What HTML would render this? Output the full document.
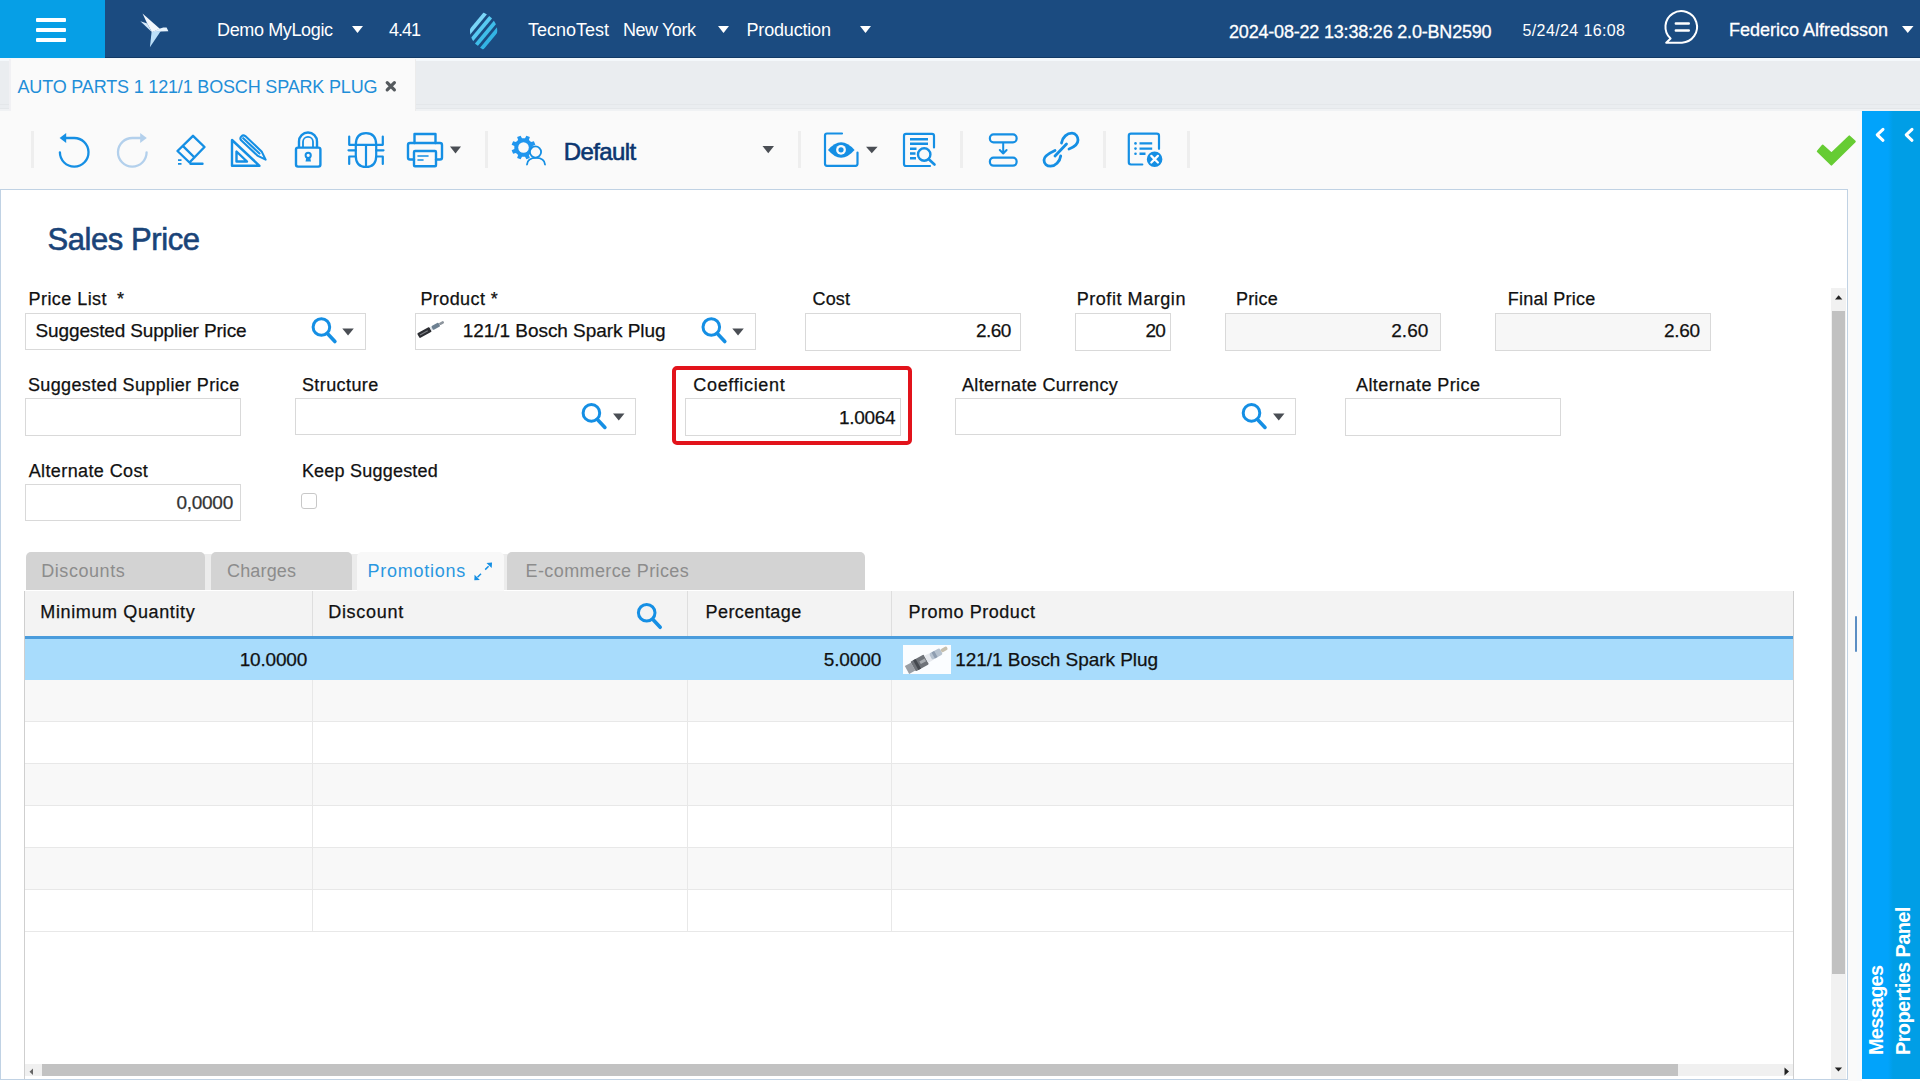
<!DOCTYPE html>
<html><head><meta charset="utf-8"><style>
html,body{margin:0;padding:0;width:1920px;height:1081px;overflow:hidden;background:#fff}
.t{position:absolute;white-space:nowrap;font-family:"Liberation Sans",sans-serif}
.d{-webkit-text-stroke:0.25px currentColor}
</style></head><body>
<div style="position:absolute;left:0px;top:0px;width:1920px;height:1081px;background:#ffffff"></div>
<div style="position:absolute;left:0px;top:0px;width:1920px;height:58px;background:#1b4b80"></div>
<div style="position:absolute;left:0px;top:57px;width:1920px;height:1px;background:#123a66"></div>
<div style="position:absolute;left:0px;top:0px;width:105px;height:58px;background:#069fe6"></div>
<div style="position:absolute;left:0px;top:58px;width:1920px;height:53px;background:#eaedf0"></div>
<div style="position:absolute;left:0px;top:58px;width:1920px;height:3px;background:#f4f8fb"></div>
<div style="position:absolute;left:0px;top:104px;width:1920px;height:1px;background:#e4e7ea"></div>
<div style="position:absolute;left:0px;top:108px;width:1920px;height:1px;background:#e4e7ea"></div>
<div style="position:absolute;left:0px;top:109px;width:1920px;height:2px;background:#f0f2f4"></div>
<div style="position:absolute;left:9px;top:59px;width:407px;height:52px;background:#fafafa;box-sizing:border-box;border-left:2px solid #f1f1f4;border-right:1px solid #ececec"></div>
<div style="position:absolute;left:0px;top:111px;width:1857px;height:78px;background:#fafafa"></div>
<div style="position:absolute;left:1857px;top:111px;width:5px;height:970px;background:#f8fafc"></div>
<div style="position:absolute;left:1848px;top:189px;width:9px;height:892px;background:#fafafa"></div>
<div style="position:absolute;left:1862px;top:111px;width:58px;height:968px;background:linear-gradient(90deg,#01a3fb 0,#01a3fb 26px,#009ee6 31px,#009ee6 58px)"></div>
<div style="position:absolute;left:0px;top:189px;width:1848px;height:891px;background:#ffffff;box-sizing:border-box;border:1px solid #c0d2e4"></div>
<div style="position:absolute;left:36px;top:18px;width:30px;height:4px;background:#fff;border-radius:1px"></div>
<div style="position:absolute;left:36px;top:28px;width:30px;height:4px;background:#fff;border-radius:1px"></div>
<div style="position:absolute;left:36px;top:38px;width:30px;height:4px;background:#fff;border-radius:1px"></div>
<div style="position:absolute;left:31px;top:131px;width:3px;height:37px;background:#eeeeee"></div>
<div style="position:absolute;left:485px;top:131px;width:3px;height:37px;background:#eeeeee"></div>
<div style="position:absolute;left:798px;top:131px;width:3px;height:37px;background:#eeeeee"></div>
<div style="position:absolute;left:960px;top:131px;width:3px;height:37px;background:#eeeeee"></div>
<div style="position:absolute;left:1103px;top:131px;width:3px;height:37px;background:#eeeeee"></div>
<div style="position:absolute;left:1187px;top:131px;width:3px;height:37px;background:#eeeeee"></div>
<div style="position:absolute;left:25px;top:313px;width:341px;height:37px;box-sizing:border-box;border:1px solid #d9d9d9;background:#fff"></div>
<div style="position:absolute;left:415px;top:313px;width:341px;height:37px;box-sizing:border-box;border:1px solid #d9d9d9;background:#fff"></div>
<div style="position:absolute;left:805px;top:313px;width:216px;height:38px;box-sizing:border-box;border:1px solid #d9d9d9;background:#fff"></div>
<div style="position:absolute;left:1075px;top:313px;width:96px;height:38px;box-sizing:border-box;border:1px solid #d9d9d9;background:#fff"></div>
<div style="position:absolute;left:1225px;top:313px;width:216px;height:38px;box-sizing:border-box;border:1px solid #d9d9d9;background:#f7f7f7"></div>
<div style="position:absolute;left:1495px;top:313px;width:216px;height:38px;box-sizing:border-box;border:1px solid #d9d9d9;background:#f7f7f7"></div>
<div style="position:absolute;left:25px;top:398px;width:216px;height:38px;box-sizing:border-box;border:1px solid #d9d9d9;background:#fff"></div>
<div style="position:absolute;left:295px;top:398px;width:341px;height:37px;box-sizing:border-box;border:1px solid #d9d9d9;background:#fff"></div>
<div style="position:absolute;left:685px;top:398px;width:216px;height:38px;box-sizing:border-box;border:1px solid #d9d9d9;background:#fff"></div>
<div style="position:absolute;left:955px;top:398px;width:341px;height:37px;box-sizing:border-box;border:1px solid #d9d9d9;background:#fff"></div>
<div style="position:absolute;left:1345px;top:398px;width:216px;height:38px;box-sizing:border-box;border:1px solid #d9d9d9;background:#fff"></div>
<div style="position:absolute;left:25px;top:484px;width:216px;height:37px;box-sizing:border-box;border:1px solid #d9d9d9;background:#fff"></div>
<div style="position:absolute;left:672px;top:366px;width:240px;height:79px;box-sizing:border-box;border:4px solid #e2131b;border-radius:5px"></div>
<div style="position:absolute;left:301px;top:493px;width:16px;height:16px;box-sizing:border-box;border:1px solid #c8c8c8;border-radius:3px;background:#fff"></div>
<div style="position:absolute;left:1831px;top:288px;width:15px;height:791px;background:#f1f1f1"></div>
<div style="position:absolute;left:1832px;top:311px;width:13px;height:663px;background:#c1c1c1"></div>
<div style="position:absolute;left:204px;top:554px;width:8px;height:36px;background:#ececec"></div>
<div style="position:absolute;left:351px;top:554px;width:7px;height:36px;background:#ececec"></div>
<div style="position:absolute;left:503px;top:554px;width:5px;height:36px;background:#ececec"></div>
<div style="position:absolute;left:26px;top:552px;width:179px;height:38px;background:#d3d3d3;border-radius:5px 5px 0 0"></div>
<div style="position:absolute;left:211px;top:552px;width:141px;height:38px;background:#d3d3d3;border-radius:5px 5px 0 0"></div>
<div style="position:absolute;left:357px;top:552px;width:147px;height:39px;background:#f8f8f8;border-radius:5px 5px 0 0"></div>
<div style="position:absolute;left:507px;top:552px;width:358px;height:38px;background:#d3d3d3;border-radius:5px 5px 0 0"></div>
<div style="position:absolute;left:24px;top:591px;width:1770px;height:488px;box-sizing:border-box;border-left:1px solid #cfcfcf;border-right:1px solid #cfcfcf;background:#fff"></div>
<div style="position:absolute;left:25px;top:591px;width:1768px;height:45px;background:#f3f3f3"></div>
<div style="position:absolute;left:25px;top:636px;width:1768px;height:3px;background:#4a9cdc"></div>
<div style="position:absolute;left:25px;top:639px;width:1768px;height:41px;background:#a8dcfc"></div>
<div style="position:absolute;left:25px;top:680px;width:1768px;height:42px;background:#f8f8f8;border-bottom:1px solid #e8e8e8;box-sizing:border-box"></div>
<div style="position:absolute;left:25px;top:722px;width:1768px;height:42px;background:#ffffff;border-bottom:1px solid #e8e8e8;box-sizing:border-box"></div>
<div style="position:absolute;left:25px;top:764px;width:1768px;height:42px;background:#f8f8f8;border-bottom:1px solid #e8e8e8;box-sizing:border-box"></div>
<div style="position:absolute;left:25px;top:806px;width:1768px;height:42px;background:#ffffff;border-bottom:1px solid #e8e8e8;box-sizing:border-box"></div>
<div style="position:absolute;left:25px;top:848px;width:1768px;height:42px;background:#f8f8f8;border-bottom:1px solid #e8e8e8;box-sizing:border-box"></div>
<div style="position:absolute;left:25px;top:890px;width:1768px;height:42px;background:#ffffff;border-bottom:1px solid #e8e8e8;box-sizing:border-box"></div>
<div style="position:absolute;left:312px;top:591px;width:1px;height:45px;background:#dedede"></div>
<div style="position:absolute;left:312px;top:680px;width:1px;height:252px;background:#e8e8e8"></div>
<div style="position:absolute;left:687px;top:591px;width:1px;height:45px;background:#dedede"></div>
<div style="position:absolute;left:687px;top:680px;width:1px;height:252px;background:#e8e8e8"></div>
<div style="position:absolute;left:891px;top:591px;width:1px;height:45px;background:#dedede"></div>
<div style="position:absolute;left:891px;top:680px;width:1px;height:252px;background:#e8e8e8"></div>
<div style="position:absolute;left:25px;top:1064px;width:1768px;height:12px;background:#f0f0f0"></div>
<div style="position:absolute;left:42px;top:1064px;width:1636px;height:12px;background:#c2c2c2"></div>
<div style="position:absolute;left:1855px;top:616px;width:2px;height:36px;background:#5b8ec4;border-radius:1px"></div>
<svg style="position:absolute;left:0;top:0" width="1920" height="1081" viewBox="0 0 1920 1081">
<circle cx="321.4" cy="327.0" r="8.3" fill="none" stroke="#158fe4" stroke-width="3"/>
<line x1="327.4" y1="333.5" x2="334.9" y2="341.5" stroke="#158fe4" stroke-width="3.6" stroke-linecap="round"/>
<polygon points="342.3,328.4 353.8,328.4 348.05,335.4" fill="#4a4e54"/>
<circle cx="711.3" cy="327.0" r="8.3" fill="none" stroke="#158fe4" stroke-width="3"/>
<line x1="717.3" y1="333.5" x2="724.8" y2="341.5" stroke="#158fe4" stroke-width="3.6" stroke-linecap="round"/>
<polygon points="732.3,328.4 743.8,328.4 738.05,335.4" fill="#4a4e54"/>
<circle cx="591.4" cy="412.9" r="8.3" fill="none" stroke="#158fe4" stroke-width="3"/>
<line x1="597.4" y1="419.4" x2="604.9" y2="427.4" stroke="#158fe4" stroke-width="3.6" stroke-linecap="round"/>
<polygon points="613,413.4 624.5,413.4 618.75,420.4" fill="#4a4e54"/>
<circle cx="1251.5" cy="412.9" r="8.3" fill="none" stroke="#158fe4" stroke-width="3"/>
<line x1="1257.5" y1="419.4" x2="1265.0" y2="427.4" stroke="#158fe4" stroke-width="3.6" stroke-linecap="round"/>
<polygon points="1273,413.4 1284.5,413.4 1278.75,420.4" fill="#4a4e54"/>
<circle cx="646.7" cy="612.8" r="8.3" fill="none" stroke="#158fe4" stroke-width="3"/>
<line x1="652.7" y1="619.3" x2="660.2" y2="627.3" stroke="#158fe4" stroke-width="3.6" stroke-linecap="round"/>
<polygon points="352,26 363,26 357.5,33" fill="#fff"/>
<polygon points="718,26 729,26 723.5,33" fill="#fff"/>
<polygon points="860,26 871,26 865.5,33" fill="#fff"/>
<polygon points="1902,26 1913.5,26 1907.75,33" fill="#fff"/>
<polygon points="450,146.4 461,146.4 455.5,153.4" fill="#4a4e54"/>
<polygon points="762.5,146 774.0,146 768.25,153.3" fill="#4a4e54"/>
<polygon points="866,146.7 877.6,146.7 871.8,153.29999999999998" fill="#4a4e54"/>
<path d="M59.9,152.3 A14.3,14.3 0 1 0 73.7,138.0 L65.5,138.0" fill="none" stroke="#158fe4" stroke-width="2.3" stroke-linecap="round" stroke-linejoin="round" />
<path d="M59.6,138 L66.2,133 L66.2,143 Z" fill="#158fe4"/>
<path d="M146.6,152.3 A14.3,14.3 0 1 1 132.8,138.0 L140.8,138.0" fill="none" stroke="#b3d0ec" stroke-width="2.3" stroke-linecap="round" stroke-linejoin="round" />
<path d="M146.8,138 L140.2,133 L140.2,143 Z" fill="#b3d0ec"/>
<path d="M177.5,151 L193,135.8 L204.5,147 L189.5,162.5 Z M182.8,145.8 L194.5,157.5 M190.5,163.8 L202.5,163.8" fill="none" stroke="#158fe4" stroke-width="2.4" stroke-linecap="round" stroke-linejoin="round" />
<path d="M178,160.2 L181.5,160.2 M178,163.8 L181.5,163.8" fill="none" stroke="#158fe4" stroke-width="1.8" stroke-linejoin="round" stroke-linecap="butt"/>
<path d="M232,140 L232,165.8 L259.5,165.8 Z M236.5,151.5 L236.5,161.5 L247,161.5 Z" fill="none" stroke="#158fe4" stroke-width="2.4" stroke-linecap="round" stroke-linejoin="round" />
<path d="M241.1,140.3 A3,3 0 0 1 245.3,136.1 L261.6,151.4 L265.6,159.6 L257.4,155.6 Z M243.2,138.2 L259.5,153.5" fill="none" stroke="#158fe4" stroke-width="2.1" stroke-linecap="round" stroke-linejoin="round" />
<path d="M299,147 L299,141.5 A9,9 0 0 1 317,141.5 L317,147" fill="none" stroke="#158fe4" stroke-width="2.4" stroke-linecap="round" stroke-linejoin="round" />
<path d="M303,147 L303,141.8 A5,5 0 0 1 313,141.8 L313,147" fill="none" stroke="#158fe4" stroke-width="1.8" stroke-linecap="round" stroke-linejoin="round" />
<rect x="296" y="147.6" width="24.4" height="19" rx="2" fill="none" stroke="#158fe4" stroke-width="2.4"/>
<circle cx="308.2" cy="155.3" r="2.6" fill="none" stroke="#158fe4" stroke-width="2"/>
<path d="M305.5,161.5 L311,161.5 L310,157 L306.5,157 Z" fill="#158fe4"/>
<path d="M355.8,144.8 L355.8,156 Q355.8,167 366,167 Q376.2,167 376.2,156 L376.2,144.8 Q376.2,133.2 366,133.2 Q355.8,133.2 355.8,144.8 Z" fill="none" stroke="#158fe4" stroke-width="2.2" stroke-linecap="round" stroke-linejoin="round" />
<path d="M349.2,136.5 L349.2,144.8 L382.8,144.8 L382.8,136.5 M366,144.8 L366,166.5 M348.5,150.3 L355.8,150.3 M376.2,150.3 L383.5,150.3 M349.2,164 L349.2,156.5 L355.8,156.5 M382.8,164 L382.8,156.5 L376.2,156.5" fill="none" stroke="#158fe4" stroke-width="2.2" stroke-linecap="round" stroke-linejoin="round" />
<path d="M414.5,143 L414.5,134 L435.5,134 L435.5,143" fill="none" stroke="#158fe4" stroke-width="2.4" stroke-linecap="round" stroke-linejoin="round" />
<path d="M414,159.5 L410,159.5 Q408,159.5 408,157.5 L408,145 Q408,143 410,143 L440,143 Q442,143 442,145 L442,157.5 Q442,159.5 440,159.5 L436,159.5" fill="none" stroke="#158fe4" stroke-width="2.4" stroke-linecap="round" stroke-linejoin="round" />
<rect x="414" y="151" width="22" height="15.2" rx="1" fill="none" stroke="#158fe4" stroke-width="2.4"/>
<path d="M418,156 L428,156 M418,160 L423,160" fill="none" stroke="#158fe4" stroke-width="1.6" stroke-linecap="round" stroke-linejoin="round" />
<polygon points="532.67,149.03 535.36,150.35 533.90,153.87 531.07,152.90 528.90,155.07 529.87,157.90 526.35,159.36 525.03,156.67 521.97,156.67 520.65,159.36 517.13,157.90 518.10,155.07 515.93,152.90 513.10,153.87 511.64,150.35 514.33,149.03 514.33,145.97 511.64,144.65 513.10,141.13 515.93,142.10 518.10,139.93 517.13,137.10 520.65,135.64 521.97,138.33 525.03,138.33 526.35,135.64 529.87,137.10 528.90,139.93 531.07,142.10 533.90,141.13 535.36,144.65 532.67,145.97" fill="#2196ee"/>
<circle cx="523.5" cy="147.5" r="5.3" fill="#fafafa"/>
<circle cx="535.5" cy="152" r="5.6" fill="#fafafa" stroke="#158fe4" stroke-width="1.8"/>
<path d="M527,164.5 Q527.5,157.8 536,157.8 Q544.5,157.8 545,164.5" fill="none" stroke="#158fe4" stroke-width="1.8" stroke-linecap="round" stroke-linejoin="round" />
<path d="M842,133.5 L827,133.5 Q825,133.5 825,135.5 L825,163.8 Q825,165.8 827,165.8 L855.5,165.8 Q857.5,165.8 857.5,163.8 L857.5,152.5" fill="none" stroke="#158fe4" stroke-width="2.2" stroke-linecap="round" stroke-linejoin="round" />
<path d="M828,150 Q841,134.5 854.6,150 Q841,165.5 828,150 Z" fill="#158fe4"/>
<circle cx="841" cy="149.8" r="4.9" fill="#fafafa"/>
<circle cx="841" cy="149.8" r="2.6" fill="#158fe4"/>
<path d="M930,166 L906,166 Q904,166 904,164 L904,135.8 Q904,133.8 906,133.8 L932,133.8 Q934,133.8 934,135.8 L934,147.5" fill="none" stroke="#158fe4" stroke-width="2.2" stroke-linecap="round" stroke-linejoin="round" />
<path d="M910,139.3 L928,139.3 M910,143.8 L928,143.8 M910,148.8 L916.5,148.8 M910,153.5 L915.5,153.5 M910,158.3 L916,158.3" fill="none" stroke="#158fe4" stroke-width="2.6" stroke-linejoin="round" stroke-linecap="butt"/>
<circle cx="924.2" cy="154.5" r="6.2" fill="#fafafa" stroke="#158fe4" stroke-width="2.4"/>
<path d="M928.8,159.2 L934.5,164.5" fill="none" stroke="#158fe4" stroke-width="2.6" stroke-linecap="round" stroke-linejoin="round" />
<rect x="989.9" y="134.4" width="26.7" height="8" rx="3.6" fill="none" stroke="#158fe4" stroke-width="2.2"/>
<rect x="989.9" y="157.7" width="26.7" height="8" rx="3.6" fill="none" stroke="#158fe4" stroke-width="2.2"/>
<path d="M1003.2,143.5 L1003.2,153.5 M999.8,150 L1003.2,153.5 L1006.6,150" fill="none" stroke="#158fe4" stroke-width="2" stroke-linecap="round" stroke-linejoin="round" />
<path d="M1061.5,143 C1062.5,137 1067,133.2 1072,133.2 C1076,133.2 1078,137 1078,140 C1078,143.5 1074.5,147 1069,149" fill="none" stroke="#158fe4" stroke-width="2.8" stroke-linecap="round" stroke-linejoin="round" />
<path d="M1055,150.5 C1049.5,153 1044,156 1044,160 C1044,164 1047,166.2 1050.5,166.2 C1055,166.2 1060,161.5 1060.7,156" fill="none" stroke="#158fe4" stroke-width="2.8" stroke-linecap="round" stroke-linejoin="round" />
<path d="M1066.5,144 L1055,156" fill="none" stroke="#158fe4" stroke-width="2.8" stroke-linecap="round" stroke-linejoin="round" />
<path d="M1142.3,164.5 L1131,164.5 Q1128.8,164.5 1128.8,162.3 L1128.8,135.8 Q1128.8,133.6 1131,133.6 L1156.8,133.6 Q1159,133.6 1159,135.8 L1159,148.8" fill="none" stroke="#158fe4" stroke-width="2.2" stroke-linecap="round" stroke-linejoin="round" />
<circle cx="1135.5" cy="143.4" r="1.3" fill="#158fe4"/>
<circle cx="1135.5" cy="148.6" r="1.3" fill="#158fe4"/>
<circle cx="1135.5" cy="153.7" r="1.3" fill="#158fe4"/>
<path d="M1139.5,143.4 L1152.2,143.4 M1139.5,148.6 L1152.2,148.6 M1139.5,153.7 L1145.5,153.7" fill="none" stroke="#158fe4" stroke-width="2.4" stroke-linejoin="round" stroke-linecap="butt"/>
<circle cx="1154.6" cy="159.2" r="8.6" fill="#158fe4" stroke="#fafafa" stroke-width="1.6"/>
<path d="M1151.3,155.9 L1157.9,162.5 M1157.9,155.9 L1151.3,162.5" fill="none" stroke="#fff" stroke-width="2.2" stroke-linecap="round" stroke-linejoin="round" />
<polygon points="1817.8,151.3 1822.6,145.6 1831.5,153.4 1849.3,136.4 1854.8,141.6 1831.4,164.6" fill="#66cc33" stroke="#66cc33" stroke-width="2" stroke-linejoin="round"/>
<path d="M1883,129.3 L1877.2,134.8 L1883,140.3" fill="none" stroke="#fff" stroke-width="3" stroke-linecap="round" stroke-linejoin="round" />
<path d="M1912,129.3 L1906.2,134.8 L1912,140.3" fill="none" stroke="#fff" stroke-width="3" stroke-linecap="round" stroke-linejoin="round" />
<path d="M1682,42.7 L1666.2,42.7 L1670.6,38.6 A15.8,15.8 0 1 1 1682,42.7 Z" fill="none" stroke="#fff" stroke-width="2" stroke-linecap="round" stroke-linejoin="round" />
<path d="M1675.8,23.5 L1688.8,23.5 M1675.8,30.5 L1688.8,30.5" fill="none" stroke="#fff" stroke-width="2.4" stroke-linecap="round" stroke-linejoin="round" />
<polygon points="142.5,13.6 159.8,28.8 152,32.2 147.2,23.6" fill="#f2f7fc"/>
<polygon points="140.4,21.3 147.2,23.6 152,32.2" fill="#d6eafa"/>
<polygon points="158.5,28.9 163.3,27.4 166.6,27.6 168.4,31.2 160.5,31.4 152,32.2" fill="#e6f2fc"/>
<polygon points="151.6,31.8 160.8,31.1 149.9,47.3" fill="#bcdff8"/>
<clipPath id="lc"><path d="M483.5,12.5 C493,17 498.5,25 497,33 C495.5,41 489,46.5 483,49.5 C475,45 469.5,39 470,30 C470.5,22 476,16 483.5,12.5 Z"/></clipPath>
<g clip-path="url(#lc)"><line x1="456.68" y1="47.76" x2="495.08" y2="1.56" stroke="#7ad6f8" stroke-width="3.8"/><line x1="461.76" y1="51.99" x2="500.16" y2="5.79" stroke="#58caf2" stroke-width="3.8"/><line x1="466.84" y1="56.21" x2="505.24" y2="10.01" stroke="#3fbde9" stroke-width="3.8"/><line x1="471.92" y1="60.44" x2="510.32" y2="14.24" stroke="#33b4e4" stroke-width="3.8"/></g>
<path d="M477.5,577.2 L481,573.7 M485.2,569.6 L488.6,566.2" fill="none" stroke="#158fe4" stroke-width="1.5" stroke-linejoin="round" stroke-linecap="butt"/>
<path d="M474.3,580.3 L474.6,574.8 L479.8,580 Z" fill="#158fe4"/>
<path d="M492,562.6 L486.5,562.9 L491.7,568.1 Z" fill="#158fe4"/>
<path d="M387.2,82.6 L394.4,89.8 M394.4,82.6 L387.2,89.8" fill="none" stroke="#555a5e" stroke-width="3.2" stroke-linecap="round" stroke-linejoin="round" />
<g transform="translate(416.5,319.5) scale(0.63)"><g transform="translate(3,26) rotate(-29)"><rect x="0" y="-4.2" width="22" height="8.4" rx="1.5" fill="#2c2e33"/><rect x="3" y="-1" width="14" height="2" fill="#7a7d82"/><rect x="22" y="-3" width="3" height="6" fill="#dfe5ea"/><rect x="25" y="-3.6" width="13" height="7.2" rx="2" fill="#6d8091"/><rect x="38" y="-2" width="8" height="4" rx="1.5" fill="#8d959d"/></g></g>
<g transform="translate(903,645) scale(1.0)"><rect x="0" y="0" width="48" height="29" fill="#fbfdff"/><g transform="translate(4,25) rotate(-29)"><rect x="0" y="-4.5" width="7" height="9" fill="#9a9ea4"/><rect x="7" y="-5.5" width="15" height="11" rx="1" fill="#6f7379"/><rect x="10" y="-5.5" width="3" height="11" fill="#45494f"/><rect x="15" y="-1.5" width="6" height="3" fill="#a8acb1"/><rect x="22" y="-4" width="5" height="8" fill="#e6e9ee"/><rect x="27" y="-3.5" width="12" height="7" rx="1.5" fill="#b6c2cf"/><rect x="30" y="-3.5" width="3" height="7" fill="#8e9db0"/><rect x="39" y="-1.8" width="7" height="3.6" rx="1.5" fill="#c5bfae"/></g></g>
<polygon points="1834.8,1067.4 1842.1,1067.4 1838.45,1071.6" fill="#222"/>
<polygon points="1835,299.5 1842.3,299.5 1838.65,295.3" fill="#222"/>
<polygon points="1784.5,1067.5 1784.5,1075.5 1789,1071.5" fill="#222"/>
<polygon points="33,1068.5 33,1075 29.5,1071.7" fill="#666"/>
</svg>
<div class="t " style="left:217.00px;top:21.20px;font-size:18px;line-height:18px;letter-spacing:-0.364px;color:#ffffff;">Demo MyLogic</div>
<div class="t " style="left:389.00px;top:21.20px;font-size:18px;line-height:18px;letter-spacing:-1.000px;color:#ffffff;">4.41</div>
<div class="t " style="left:528.00px;top:21.00px;font-size:18px;line-height:18px;letter-spacing:0.000px;color:#ffffff;">TecnoTest</div>
<div class="t " style="left:623.00px;top:21.00px;font-size:18px;line-height:18px;letter-spacing:-0.443px;color:#ffffff;">New York</div>
<div class="t " style="left:746.50px;top:21.00px;font-size:18px;line-height:18px;letter-spacing:-0.178px;color:#ffffff;">Production</div>
<div class="t " style="left:1229.00px;top:23.20px;font-size:18px;line-height:18px;letter-spacing:-0.193px;color:#ffffff;-webkit-text-stroke:0.3px #fff;">2024-08-22 13:38:26 2.0-BN2590</div>
<div class="t " style="left:1522.50px;top:22.50px;font-size:16px;line-height:16px;letter-spacing:0.383px;color:#ffffff;">5/24/24 16:08</div>
<div class="t " style="left:1729.00px;top:20.70px;font-size:18px;line-height:18px;letter-spacing:-0.006px;color:#ffffff;-webkit-text-stroke:0.3px #fff;">Federico Alfredsson</div>
<div class="t " style="left:17.50px;top:77.50px;font-size:18px;line-height:18px;letter-spacing:-0.171px;color:#1f8ed8;">AUTO PARTS 1 121/1 BOSCH SPARK PLUG</div>
<div class="t " style="left:563.80px;top:140.30px;font-size:24px;line-height:24px;letter-spacing:-0.600px;color:#0b3670;-webkit-text-stroke:0.6px #0b3670;">Default</div>
<div class="t " style="left:47.50px;top:224.00px;font-size:31px;line-height:31px;letter-spacing:-0.430px;color:#1a4478;-webkit-text-stroke:0.6px #1a4478;">Sales Price</div>
<div class="t d" style="left:28.50px;top:290.30px;font-size:18px;line-height:18px;letter-spacing:0.444px;color:#111;">Price List</div>
<div class="t d" style="left:117.00px;top:290.30px;font-size:18px;line-height:18px;letter-spacing:0.000px;color:#111;">*</div>
<div class="t d" style="left:420.40px;top:290.30px;font-size:18px;line-height:18px;letter-spacing:0.425px;color:#111;">Product *</div>
<div class="t d" style="left:812.50px;top:290.30px;font-size:18px;line-height:18px;letter-spacing:0.167px;color:#111;">Cost</div>
<div class="t d" style="left:1076.70px;top:290.30px;font-size:18px;line-height:18px;letter-spacing:0.558px;color:#111;">Profit Margin</div>
<div class="t d" style="left:1236.00px;top:290.30px;font-size:18px;line-height:18px;letter-spacing:0.175px;color:#111;">Price</div>
<div class="t d" style="left:1507.70px;top:290.30px;font-size:18px;line-height:18px;letter-spacing:0.250px;color:#111;">Final Price</div>
<div class="t d" style="left:35.60px;top:321.20px;font-size:19px;line-height:19px;letter-spacing:-0.148px;color:#111;">Suggested Supplier Price</div>
<div class="t d" style="left:462.80px;top:321.20px;font-size:19px;line-height:19px;letter-spacing:-0.052px;color:#111;">121/1 Bosch Spark Plug</div>
<div class="t d" style="left:976.00px;top:321.20px;font-size:19px;line-height:19px;letter-spacing:-0.583px;color:#111;">2.60</div>
<div class="t d" style="left:1145.40px;top:321.20px;font-size:19px;line-height:19px;letter-spacing:-0.700px;color:#111;">20</div>
<div class="t d" style="left:1391.25px;top:321.20px;font-size:19px;line-height:19px;letter-spacing:0.017px;color:#111;">2.60</div>
<div class="t d" style="left:1664.00px;top:321.20px;font-size:19px;line-height:19px;letter-spacing:-0.267px;color:#111;">2.60</div>
<div class="t d" style="left:28.00px;top:375.80px;font-size:18px;line-height:18px;letter-spacing:0.352px;color:#111;">Suggested Supplier Price</div>
<div class="t d" style="left:301.90px;top:375.80px;font-size:18px;line-height:18px;letter-spacing:0.413px;color:#111;">Structure</div>
<div class="t d" style="left:693.30px;top:375.80px;font-size:18px;line-height:18px;letter-spacing:0.670px;color:#111;">Coefficient</div>
<div class="t d" style="left:839.00px;top:408.20px;font-size:19px;line-height:19px;letter-spacing:-0.320px;color:#111;">1.0064</div>
<div class="t d" style="left:962.00px;top:375.80px;font-size:18px;line-height:18px;letter-spacing:0.335px;color:#111;">Alternate Currency</div>
<div class="t d" style="left:1356.00px;top:375.80px;font-size:18px;line-height:18px;letter-spacing:0.421px;color:#111;">Alternate Price</div>
<div class="t d" style="left:28.70px;top:462.00px;font-size:18px;line-height:18px;letter-spacing:0.392px;color:#111;">Alternate Cost</div>
<div class="t d" style="left:176.50px;top:493.00px;font-size:19px;line-height:19px;letter-spacing:-0.280px;color:#333;">0,0000</div>
<div class="t d" style="left:301.90px;top:462.00px;font-size:18px;line-height:18px;letter-spacing:0.215px;color:#111;">Keep Suggested</div>
<div class="t " style="left:41.25px;top:561.60px;font-size:18px;line-height:18px;letter-spacing:0.556px;color:#8c8c8c;">Discounts</div>
<div class="t " style="left:227.00px;top:561.60px;font-size:18px;line-height:18px;letter-spacing:0.167px;color:#8c8c8c;">Charges</div>
<div class="t " style="left:367.60px;top:561.60px;font-size:18px;line-height:18px;letter-spacing:0.722px;color:#2a97e0;">Promotions</div>
<div class="t " style="left:525.60px;top:561.60px;font-size:18px;line-height:18px;letter-spacing:0.381px;color:#8c8c8c;">E-commerce Prices</div>
<div class="t d" style="left:40.30px;top:603.40px;font-size:18px;line-height:18px;letter-spacing:0.620px;color:#111;">Minimum Quantity</div>
<div class="t d" style="left:328.20px;top:603.40px;font-size:18px;line-height:18px;letter-spacing:0.714px;color:#111;">Discount</div>
<div class="t d" style="left:705.60px;top:603.40px;font-size:18px;line-height:18px;letter-spacing:0.389px;color:#111;">Percentage</div>
<div class="t d" style="left:908.40px;top:603.40px;font-size:18px;line-height:18px;letter-spacing:0.542px;color:#111;">Promo Product</div>
<div class="t d" style="left:239.75px;top:649.50px;font-size:19px;line-height:19px;letter-spacing:-0.200px;color:#111;">10.0000</div>
<div class="t d" style="left:823.70px;top:649.50px;font-size:19px;line-height:19px;letter-spacing:-0.080px;color:#111;">5.0000</div>
<div class="t d" style="left:955.30px;top:649.50px;font-size:19px;line-height:19px;letter-spacing:-0.052px;color:#111;">121/1 Bosch Spark Plug</div>
<div class="t" style="left:1883.00px;top:1038.00px;font-size:20px;line-height:20px;letter-spacing:-0.800px;color:#fff;transform-origin:0 17.00px;transform:rotate(-90deg);font-weight:bold;">Messages</div>
<div class="t" style="left:1910.30px;top:1038.00px;font-size:20px;line-height:20px;letter-spacing:-0.640px;color:#fff;transform-origin:0 17.00px;transform:rotate(-90deg);font-weight:bold;">Properties Panel</div>
</body></html>
